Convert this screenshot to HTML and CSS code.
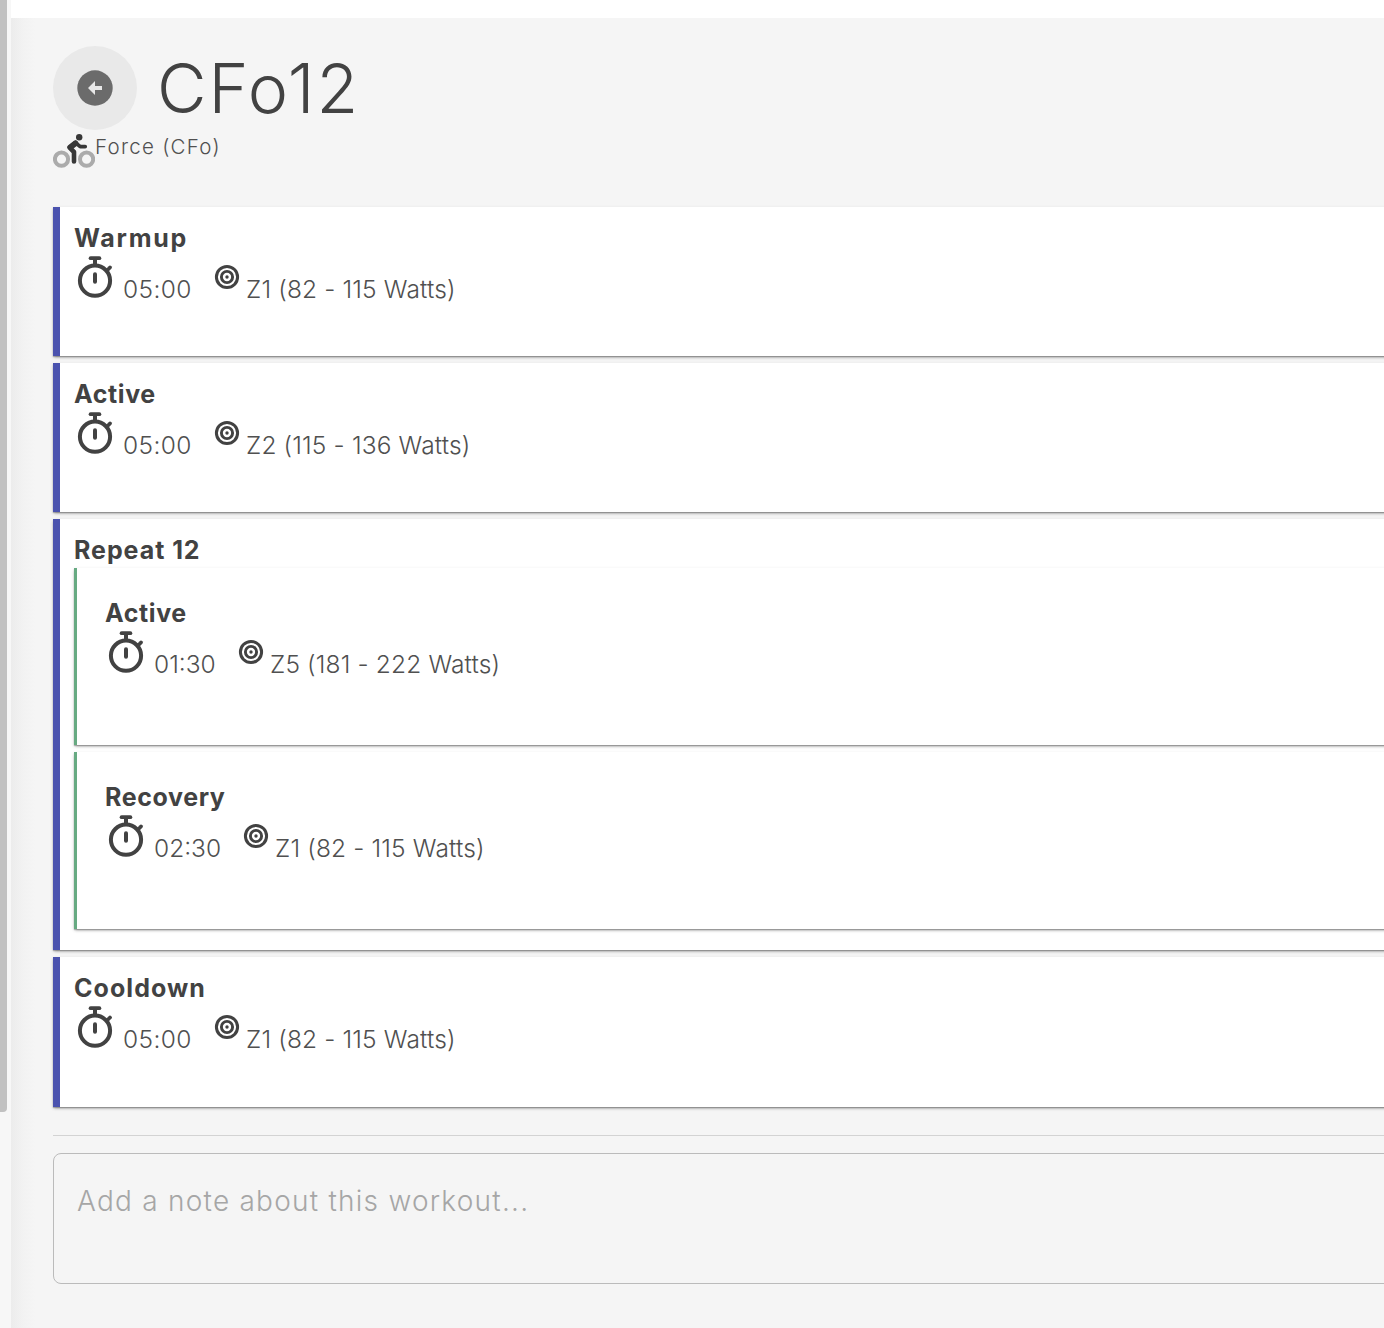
FILE: index.html
```html
<!DOCTYPE html>
<html lang="en">
<head>
<meta charset="utf-8">
<title>CFo12</title>
<link rel="stylesheet" href="styles.css">
</head>
<body>
<svg class="defs" width="0" height="0" aria-hidden="true">
  <symbol id="stopwatch" viewBox="0 0 42 42">
    <g fill="none" stroke="#424242" stroke-linecap="round">
      <circle cx="21" cy="24.7" r="15.1" stroke-width="4"/>
      <path d="M21 3v6" stroke-width="4" stroke-linecap="butt"/>
      <path d="M16.6 2.2h8.8" stroke-width="3.8"/>
      <path d="M33 14.5l3-3" stroke-width="3.8"/>
      <path d="M21 18.2v7.6" stroke-width="4"/>
    </g>
  </symbol>
  <symbol id="target" viewBox="0 0 26 26">
    <g fill="none" stroke="#424242">
      <circle cx="13" cy="13" r="10.6" stroke-width="3"/>
      <circle cx="13" cy="13" r="5.6" stroke-width="2.9"/>
      <circle cx="13" cy="13" r="1.7" fill="#424242" stroke="none"/>
    </g>
  </symbol>
</svg>
<div class="app">
  <aside class="gutter"><div class="thumb"></div></aside>
  <main class="main">
    <header class="header">
      <button class="back" aria-label="Back">
        <svg width="36" height="36" viewBox="0 0 36 36"><circle cx="18" cy="18" r="17.7" fill="#6b6b6b"/><path d="M11 18l7-7v5h7v4h-7v5z" fill="#e8e8e8"/></svg>
      </button>
      <h1 class="title">CFo12</h1>
    </header>
    <div class="meta">
      <svg width="42" height="42" viewBox="0 0 42 42">
        <g fill="none" stroke="#ababab" stroke-width="4"><circle cx="8.5" cy="29.2" r="6.6"/><circle cx="33.6" cy="29.2" r="6.6"/></g>
        <circle cx="26.2" cy="7.3" r="3.2" fill="#383838"/>
        <path d="M22.4 12.6L16.4 17.4L21 22V31.4" fill="none" stroke="#383838" stroke-width="4.6" stroke-linecap="round" stroke-linejoin="round"/>
        <path d="M17.6 17.4l5-4.1" fill="none" stroke="#383838" stroke-width="5.4" stroke-linecap="round"/>
        <path d="M22.6 12.8l4.6 3.8h5" fill="none" stroke="#383838" stroke-width="3.8" stroke-linecap="round" stroke-linejoin="round"/>
      </svg>
      <span class="sport">Force (CFo)</span>
    </div>

    <section class="steps">
      <article class="step">
        <h2 class="name warmup">Warmup</h2>
        <div class="detail">
          <svg class="watch"><use href="#stopwatch"/></svg><span class="time wide">05:00</span>
          <svg class="aim"><use href="#target"/></svg><span class="zone">Z1 (82 - 115 Watts)</span>
        </div>
      </article>
      <article class="step">
        <h2 class="name">Active</h2>
        <div class="detail">
          <svg class="watch"><use href="#stopwatch"/></svg><span class="time wide">05:00</span>
          <svg class="aim"><use href="#target"/></svg><span class="zone">Z2 (115 - 136 Watts)</span>
        </div>
      </article>
      <article class="step repeat">
        <h2 class="name group">Repeat 12</h2>
        <div class="substeps">
          <article class="substep">
            <h2 class="name">Active</h2>
            <div class="detail">
              <svg class="watch"><use href="#stopwatch"/></svg><span class="time narrow">01:30</span>
              <svg class="aim"><use href="#target"/></svg><span class="zone">Z5 (181 - 222 Watts)</span>
            </div>
          </article>
          <article class="substep">
            <h2 class="name">Recovery</h2>
            <div class="detail">
              <svg class="watch"><use href="#stopwatch"/></svg><span class="time">02:30</span>
              <svg class="aim"><use href="#target"/></svg><span class="zone">Z1 (82 - 115 Watts)</span>
            </div>
          </article>
        </div>
      </article>
      <article class="step">
        <h2 class="name cooldown">Cooldown</h2>
        <div class="detail">
          <svg class="watch"><use href="#stopwatch"/></svg><span class="time wide">05:00</span>
          <svg class="aim"><use href="#target"/></svg><span class="zone">Z1 (82 - 115 Watts)</span>
        </div>
      </article>
    </section>

    <hr class="rule">
    <textarea class="note" placeholder="Add a note about this workout..."></textarea>
  </main>
</div>
</body>
</html>
```
FILE: styles.css
```css
* { box-sizing: border-box; }
body { margin: 0; height: 1328px; overflow: hidden; background: #f5f5f5; color: #424242; font-family: Inter, sans-serif; font-weight: 300; }
h1, h2 { margin: 0; }
svg { display: block; flex: none; }
.defs { position: absolute; }
.app { display: flex; height: 1328px; }
.gutter { width: 11px; flex: none; background: #f7f7f7; }
.thumb { width: 7px; height: 1112px; background: #c1c1c1; border-bottom-right-radius: 4px; }
.main {
  flex: 1; min-width: 0; padding: 28px 0 0 42px; border-top: 18px solid #fff;
  background: linear-gradient(to right, #ececec, #f2f2f2 12px, #f5f5f5 24px);
}
.header { display: flex; align-items: center; height: 84px; }
.back { width: 84px; height: 84px; padding: 0; border: 0; border-radius: 50%; background: #e9e9e9; display: flex; align-items: center; justify-content: center; }
.title { margin-left: 20px; font-size: 68px; line-height: 84px; font-weight: 350; letter-spacing: 2px; }
.meta { display: flex; height: 77px; }
.sport { font-size: 20.5px; line-height: 33px; letter-spacing: 1.27px; color: #505050; }

.steps { display: flex; flex-direction: column; gap: 7px; margin-right: -20px; }
.step, .substep { background: #fff; box-shadow: 0 2px 3px -1px rgba(0,0,0,.35), 0 1px 1px rgba(0,0,0,.2), 0 1px 4px rgba(0,0,0,.08); }
.step { height: 149px; padding: 14px 0 0 14px; border-left: 7px solid #4a52ae; }
.step.repeat { height: 431px; }
.step:last-child { height: 150px; }
.substeps { display: flex; flex-direction: column; gap: 7px; margin-top: 1px; }
.substep { height: 177px; padding: 28px 0 0 28px; border-left: 3px solid #67aa82; }

.name { height: 34px; font-size: 25px; line-height: 35px; font-weight: 700; letter-spacing: .6px; }
.warmup { letter-spacing: 1.75px; }
.group { letter-spacing: .95px; }
.cooldown { letter-spacing: 1.05px; }
.detail { display: flex; }
.watch { width: 42px; height: 42px; margin-top: 1px; }
.time, .zone { margin-top: 17px; font-size: 24.5px; line-height: 34px; white-space: nowrap; color: #505050; }
.time { width: 89px; margin-left: 7px; }
.time.wide { width: 91px; letter-spacing: .4px; }
.time.narrow { width: 84px; }
.aim { width: 26px; height: 26px; margin-top: 9px; }
.zone { margin-left: 6px; letter-spacing: .15px; }

.rule { height: 1px; margin: 28px 0 17px; border: 0; background: #d3d3d3; }
.note {
  display: block; width: calc(100% + 20px); height: 131px; padding: 30px 23px; resize: none; outline: 0;
  border: 1px solid #bbb; border-radius: 8px; background: transparent;
  font: 300 28px/35px Inter, sans-serif; letter-spacing: 1.24px;
}
.note::placeholder { color: #a6a6a6; opacity: 1; }
```
